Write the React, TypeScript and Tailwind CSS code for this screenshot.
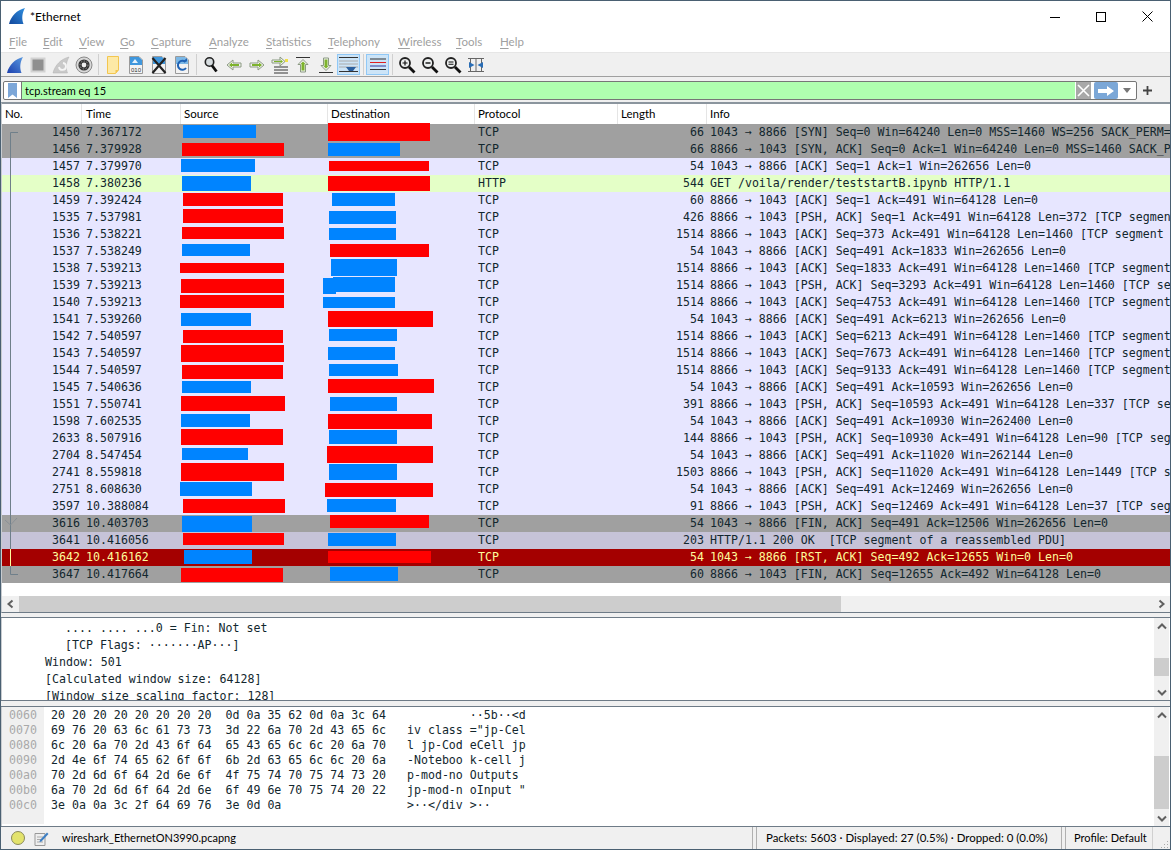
import React from "react";

const R = "#ff0000";
const B = "#0084ff";

const GRAY = "bg-[#a0a0a0]";
const LAV = "bg-[#e7e6ff]";
const GRN = "bg-[#e4ffc7]";
const DK = "text-[#12272e]";

const raw: [string, string, string, string, string, string, number[], number[]][] = [
  ["1450", "7.367172", "TCP", "66", "1043 → 8866 [SYN] Seq=0 Win=64240 Len=0 MSS=1460 WS=256 SACK_PERM=1", GRAY, [183, 256, 125, 138], [328, 430, 123, 141]],
  ["1456", "7.379928", "TCP", "66", "8866 → 1043 [SYN, ACK] Seq=0 Ack=1 Win=64240 Len=0 MSS=1460 SACK_PERM=1", GRAY, [182, 284, 143, 156], [328, 400, 143, 156]],
  ["1457", "7.379970", "TCP", "54", "1043 → 8866 [ACK] Seq=1 Ack=1 Win=262656 Len=0", LAV, [181, 255, 159, 172], [329, 429, 161, 171]],
  ["1458", "7.380236", "HTTP", "544", "GET /voila/render/teststartB.ipynb HTTP/1.1", GRN, [182, 251, 176, 191], [328, 430, 176, 191]],
  ["1459", "7.392424", "TCP", "60", "8866 → 1043 [ACK] Seq=1 Ack=491 Win=64128 Len=0", LAV, [183, 283, 193, 206], [332, 395, 193, 206]],
  ["1535", "7.537981", "TCP", "426", "8866 → 1043 [PSH, ACK] Seq=1 Ack=491 Win=64128 Len=372 [TCP segment of a reassembled PDU]", LAV, [183, 283, 209, 223], [329, 396, 211, 224]],
  ["1536", "7.538221", "TCP", "1514", "8866 → 1043 [ACK] Seq=373 Ack=491 Win=64128 Len=1460 [TCP segment of a reassembled PDU]", LAV, [182, 284, 227, 239], [329, 396, 228, 240]],
  ["1537", "7.538249", "TCP", "54", "1043 → 8866 [ACK] Seq=491 Ack=1833 Win=262656 Len=0", LAV, [182, 250, 244, 256], [330, 429, 244, 257]],
  ["1538", "7.539213", "TCP", "1514", "8866 → 1043 [ACK] Seq=1833 Ack=491 Win=64128 Len=1460 [TCP segment of a reassembled PDU]", LAV, [180, 284, 263, 273], [331, 397, 259, 276]],
  ["1539", "7.539213", "TCP", "1514", "8866 → 1043 [PSH, ACK] Seq=3293 Ack=491 Win=64128 Len=1460 [TCP segment of a reassembled PDU]", LAV, [181, 284, 279, 293], [333, 395, 277, 292]],
  ["1540", "7.539213", "TCP", "1514", "8866 → 1043 [ACK] Seq=4753 Ack=491 Win=64128 Len=1460 [TCP segment of a reassembled PDU]", LAV, [180, 284, 295, 308], [323, 395, 297, 308]],
  ["1541", "7.539260", "TCP", "54", "1043 → 8866 [ACK] Seq=491 Ack=6213 Win=262656 Len=0", LAV, [181, 251, 313, 326], [328, 433, 311, 327]],
  ["1542", "7.540597", "TCP", "1514", "8866 → 1043 [ACK] Seq=6213 Ack=491 Win=64128 Len=1460 [TCP segment of a reassembled PDU]", LAV, [183, 283, 330, 343], [329, 397, 329, 341]],
  ["1543", "7.540597", "TCP", "1514", "8866 → 1043 [ACK] Seq=7673 Ack=491 Win=64128 Len=1460 [TCP segment of a reassembled PDU]", LAV, [181, 284, 345, 362], [328, 395, 347, 360]],
  ["1544", "7.540597", "TCP", "1514", "8866 → 1043 [ACK] Seq=9133 Ack=491 Win=64128 Len=1460 [TCP segment of a reassembled PDU]", LAV, [182, 283, 365, 379], [329, 398, 364, 376]],
  ["1545", "7.540636", "TCP", "54", "1043 → 8866 [ACK] Seq=491 Ack=10593 Win=262656 Len=0", LAV, [182, 251, 381, 393], [328, 434, 379, 393]],
  ["1551", "7.550741", "TCP", "391", "8866 → 1043 [PSH, ACK] Seq=10593 Ack=491 Win=64128 Len=337 [TCP segment of a reassembled PDU]", LAV, [181, 285, 396, 411], [330, 397, 397, 411]],
  ["1598", "7.602535", "TCP", "54", "1043 → 8866 [ACK] Seq=491 Ack=10930 Win=262400 Len=0", LAV, [181, 250, 414, 427], [328, 432, 414, 429]],
  ["2633", "8.507916", "TCP", "144", "8866 → 1043 [PSH, ACK] Seq=10930 Ack=491 Win=64128 Len=90 [TCP segment of a reassembled PDU]", LAV, [181, 283, 429, 445], [329, 397, 430, 444]],
  ["2704", "8.547454", "TCP", "54", "1043 → 8866 [ACK] Seq=491 Ack=11020 Win=262144 Len=0", LAV, [182, 248, 448, 460], [327, 433, 446, 463]],
  ["2741", "8.559818", "TCP", "1503", "8866 → 1043 [PSH, ACK] Seq=11020 Ack=491 Win=64128 Len=1449 [TCP segment of a reassembled PDU]", LAV, [181, 284, 463, 481], [329, 397, 464, 480]],
  ["2751", "8.608630", "TCP", "54", "1043 → 8866 [ACK] Seq=491 Ack=12469 Win=262656 Len=0", LAV, [180, 252, 482, 496], [325, 433, 483, 497]],
  ["3597", "10.388084", "TCP", "91", "8866 → 1043 [PSH, ACK] Seq=12469 Ack=491 Win=64128 Len=37 [TCP segment of a reassembled PDU]", LAV, [183, 285, 499, 513], [327, 396, 499, 512]],
  ["3616", "10.403703", "TCP", "54", "1043 → 8866 [FIN, ACK] Seq=491 Ack=12506 Win=262656 Len=0", GRAY, [182, 252, 516, 532], [330, 429, 515, 528]],
  ["3641", "10.416056", "TCP", "203", "HTTP/1.1 200 OK  [TCP segment of a reassembled PDU]", "bg-[#c6c3d8]", [183, 284, 533, 545], [328, 396, 533, 546]],
  ["3642", "10.416162", "TCP", "54", "1043 → 8866 [RST, ACK] Seq=492 Ack=12655 Win=0 Len=0", "bg-[#a40000]", [184, 252, 550, 564], [328, 431, 551, 563]],
  ["3647", "10.417664", "TCP", "60", "8866 → 1043 [FIN, ACK] Seq=12655 Ack=492 Win=64128 Len=0", GRAY, [181, 283, 568, 582], [330, 398, 567, 581]],
];

function Redact({ b, color, top }: { b: number[]; color: string; top: number }) {
  return (
    <div
      className="absolute z-10"
      style={{ left: b[0] - 2, width: b[1] - b[0], top: b[2] - top, height: b[3] - b[2], background: color }}
    />
  );
}

const redSrc = [1, 4, 5, 6, 8, 9, 10, 12, 13, 14, 16, 18, 20, 22, 24, 26];

function PacketRow({ r, i }: { r: (typeof raw)[number]; i: number }) {
  const [no, t, p, len, info, bg, src, dst] = r;
  const top = 124 + i * 17;
  const red = redSrc.includes(i);
  return (
    <div className={`relative flex h-[17px] leading-[17px] whitespace-pre ${bg} ${i === 25 ? "text-[#fffc9c]" : DK}`}>
      <div className="w-[78px] shrink-0 text-right">{no}</div>
      <div className="w-[101px] shrink-0 pl-[6px]">{t}</div>
      <div className="w-[147px] shrink-0" />
      <div className="w-[147px] shrink-0" />
      <div className="w-[143px] shrink-0 pl-[3px]">{p}</div>
      <div className="w-[86px] shrink-0 text-right">{len}</div>
      <div className="min-w-0 flex-1 overflow-hidden pl-[6px]">{info}</div>
      <Redact b={src} color={red ? R : B} top={top} />
      <Redact b={dst} color={red ? B : R} top={top} />
      {i === 9 && <Redact b={[323, 336, 278, 294]} color={B} top={top} />}
    </div>
  );
}

function Fin({ a = "#5a9ae0", b = "#1c3fae" }: { a?: string; b?: string }) {
  return (
    <svg width="18" height="18" viewBox="0 0 18 18">
      <defs>
        <linearGradient id={`g${a.slice(1)}`} x1="1" y1="0" x2="0" y2="1">
          <stop offset="0" stopColor={a} />
          <stop offset="1" stopColor={b} />
        </linearGradient>
      </defs>
      <path d="M1 17 C3 9 9 3 17 1 C14 6 13.5 12 15.5 17 Z" fill={`url(#g${a.slice(1)})`} />
    </svg>
  );
}

function Doc({ children }: { children?: React.ReactNode }) {
  return (
    <svg width="18" height="20" viewBox="0 0 18 20">
      <path d="M2.5 1.5 H12 L15.5 5 V18.5 H2.5 Z" fill="#f3f3f3" stroke="#9a9a9a" />
      {children}
    </svg>
  );
}

function Mag({ children }: { children?: React.ReactNode }) {
  return (
    <svg width="18" height="18" viewBox="0 0 18 18">
      <circle cx="7" cy="7" r="5" fill="#eef0f0" stroke="#222" strokeWidth="1.8" />
      <path d="M11 11 L16.5 16.5" stroke="#111" strokeWidth="2.8" />
      {children}
    </svg>
  );
}

function Arrow({ d }: { d: "l" | "r" }) {
  return (
    <svg width="16" height="12" viewBox="0 0 16 12">
      <g transform={d === "r" ? "" : "translate(16 0) scale(-1 1)"}>
        <path d="M1 4 H9 V1 L15 6 L9 11 V8 H1 Z" fill="#f2f2f0" stroke="#8b9a82" />
        <path d="M3 5 H10 V3.5 L13 6 L10 8.5 V7 H3 Z" fill="#7db32c" />
      </g>
    </svg>
  );
}

const Btn = ({ on, children }: { on?: boolean; children: React.ReactNode }) => (
  <div className={`flex h-[21px] w-[23px] shrink-0 items-center justify-center ${on ? "border border-[#90c8f6] bg-[#cce4f7]" : ""}`}>
    {children}
  </div>
);
const Sep = () => (
  <div className="flex h-[21px] w-[6px] shrink-0 justify-center">
    <div className="h-full w-px bg-[#d0d0d0]" />
  </div>
);

function Toolbar() {
  return (
    <div className="flex h-[25px] shrink-0 items-center border-t border-b border-t-[#e6e6e6] border-b-[#a0a0a0] bg-[#f0f0f0] pl-[2px]">
      <Btn><Fin /></Btn>
      <Btn>
        <svg width="16" height="16" viewBox="0 0 16 16"><rect x="1.5" y="1.5" width="13" height="13" fill="#8f8f8f" stroke="#d2d2d2" strokeWidth="2" /></svg>
      </Btn>
      <Btn>
        <svg width="18" height="18" viewBox="0 0 18 18">
          <path d="M1 17 C3 9 9 3 17 1 C14 6 13.5 12 15.5 17 Z" fill="#c9c9c9" stroke="#b0b0b0" strokeWidth="0.5" />
          <path d="M11 7 A3.5 3.5 0 1 1 7 11" fill="none" stroke="#f5f5f5" strokeWidth="1.8" />
        </svg>
      </Btn>
      <Btn>
        <svg width="18" height="18" viewBox="0 0 18 18">
          <circle cx="9" cy="9" r="8" fill="#d8d8d8" stroke="#8a8a8a" />
          <circle cx="9" cy="9" r="5.6" fill="#333" />
          <circle cx="9" cy="9" r="2.4" fill="#eee" />
          <circle cx="9" cy="9" r="4" fill="none" stroke="#999" strokeDasharray="1.5 1.5" />
        </svg>
      </Btn>
      <Sep />
      <Btn>
        <svg width="14" height="18" viewBox="0 0 14 18">
          <path d="M1.5 .5 H12.5 V14 L9.5 17.5 H1.5 Z" fill="#fde9a6" stroke="#f3c64f" />
          <path d="M9.5 14 H12.5 L9.5 17.5 Z" fill="#f3c64f" />
        </svg>
      </Btn>
      <Btn>
        <Doc>
          <path d="M3 2 H12 L15 5 V10 H3 Z" fill="#3f97dd" />
          <path d="M5 8 L8 4 L11 8 Z" fill="#e6f2fb" />
          <text x="9" y="16.5" textAnchor="middle" fontSize="6" fontFamily="Liberation Sans" fill="#333">010</text>
        </Doc>
      </Btn>
      <Btn>
        <Doc>
          <path d="M3 2 H12 L15 5 V9 H3 Z" fill="#3f97dd" />
          <path d="M2.5 3 L15.5 18 M15.5 3 L2.5 18" stroke="#222" strokeWidth="2.2" />
        </Doc>
      </Btn>
      <Btn>
        <Doc>
          <path d="M3 2 H12 L15 5 V9 H3 Z" fill="#7cb8e6" />
          <path d="M12.5 7 A4.5 4.5 0 1 0 13 13" fill="none" stroke="#1f62b4" strokeWidth="2" />
          <path d="M10 6.5 H14 V3 Z" fill="#1f62b4" />
        </Doc>
      </Btn>
      <Sep />
      <Btn>
        <svg width="14" height="18" viewBox="0 0 14 18">
          <circle cx="5.5" cy="6" r="4.2" fill="#d7dde0" stroke="#222" strokeWidth="1.6" />
          <path d="M8 9.5 L12.5 15.5" stroke="#111" strokeWidth="2.8" />
        </svg>
      </Btn>
      <Btn><Arrow d="l" /></Btn>
      <Btn><Arrow d="r" /></Btn>
      <Btn>
        <svg width="18" height="18" viewBox="0 0 18 18">
          <path d="M3 11 H17 M3 14 H17 M3 17 H17" stroke="#333" strokeWidth="1" />
          <path d="M1 4 H9 V1 L14 5.5 L9 10 V7 H1 Z" fill="#f2f2f0" stroke="#8b9a82" />
          <path d="M3 5 H9.5 V3.5 L12 5.5 L9.5 7.5 V6 H3 Z" fill="#7db32c" />
          <rect x="14" y="3" width="3" height="3" fill="#f0e04a" />
        </svg>
      </Btn>
      <Btn>
        <svg width="16" height="18" viewBox="0 0 16 18">
          <path d="M1 1.5 H15" stroke="#333" />
          <path d="M8 3.5 L13 8.5 H10.5 V16 H5.5 V8.5 H3 Z" fill="#f2f2f0" stroke="#8b9a82" />
          <path d="M8 5.5 L10.5 8 H9.5 V14.5 H6.5 V8 H5.5 Z" fill="#7db32c" />
        </svg>
      </Btn>
      <Btn>
        <svg width="16" height="18" viewBox="0 0 16 18">
          <path d="M1 16.5 H15" stroke="#333" />
          <path d="M8 14.5 L13 9.5 H10.5 V2 H5.5 V9.5 H3 Z" fill="#f2f2f0" stroke="#8b9a82" />
          <path d="M8 12.5 L10.5 10 H9.5 V3.5 H6.5 V10 H5.5 Z" fill="#7db32c" />
        </svg>
      </Btn>
      <Btn on>
        <svg width="19" height="17" viewBox="0 0 19 17">
          <path d="M0 1.5 H19 M0 15.5 H19" stroke="#333" />
          <path d="M0 5 H19 M0 8 H19 M0 11 H19" stroke="#aaa" />
          <path d="M7 11 H17 L14 15 H10 Z" fill="#2a5f9e" />
        </svg>
      </Btn>
      <Sep />
      <Btn on>
        <svg width="16" height="13" viewBox="0 0 16 13">
          <path d="M0 1 H16" stroke="#333" />
          <path d="M0 4.5 H16" stroke="#e02020" />
          <path d="M0 8 H16" stroke="#303a9c" />
          <path d="M0 11.5 H16" stroke="#333" />
        </svg>
      </Btn>
      <Sep />
      <Btn><Mag><path d="M4.5 7 H9.5 M7 4.5 V9.5" stroke="#111" strokeWidth="1.2" /></Mag></Btn>
      <Btn><Mag><path d="M4.5 7 H9.5" stroke="#111" strokeWidth="1.4" /></Mag></Btn>
      <Btn><Mag><path d="M4.5 6 H9.5 M4.5 8.2 H9.5" stroke="#111" strokeWidth="1.1" /></Mag></Btn>
      <Btn>
        <svg width="16" height="16" viewBox="0 0 16 16">
          <path d="M0 1.5 H16 M0 14.5 H16 M2.5 1 V15 M13.5 1 V15 M8 1 V15" stroke="#666" />
          <path d="M1 5 L6.5 8 L1 11 Z M15 5 L9.5 8 L15 11 Z" fill="#2a6db5" />
        </svg>
      </Btn>
    </div>
  );
}

const menus: [string, string, string][] = [
  ["F", "ile", "w-[34px]"],
  ["E", "dit", "w-[36px]"],
  ["V", "iew", "w-[41px]"],
  ["G", "o", "w-[31px]"],
  ["C", "apture", "w-[58px]"],
  ["A", "nalyze", "w-[57px]"],
  ["S", "tatistics", "w-[62px]"],
  ["T", "elephony", "w-[70px]"],
  ["W", "ireless", "w-[58px]"],
  ["T", "ools", "w-[44px]"],
  ["H", "elp", "w-[40px]"],
];

function Chev({ dir }: { dir: "l" | "r" | "u" | "d" }) {
  const p = { l: "M6.5 1.5 L2.5 5 L6.5 8.5", r: "M2.5 1.5 L6.5 5 L2.5 8.5", u: "M1 6.5 L5 2.5 L9 6.5", d: "M1 3.5 L5 7.5 L9 3.5" }[dir];
  return (
    <svg width="10" height="10" viewBox="0 0 10 10">
      <path d={p} fill="none" stroke="#606060" strokeWidth="2" />
    </svg>
  );
}

function VScroll({ before, thumb }: { before: string; thumb: string }) {
  return (
    <div className="mr-[1px] flex w-[15px] shrink-0 flex-col bg-[#f0f0f0]">
      <div className="flex h-[17px] shrink-0 items-center justify-center"><Chev dir="u" /></div>
      <div className="min-h-0 flex-1">
        <div className={before} />
        <div className={`${thumb} bg-[#cdcdcd]`} />
      </div>
      <div className="flex h-[17px] shrink-0 items-center justify-center"><Chev dir="d" /></div>
    </div>
  );
}

const hex: [string, string, string][] = [
  ["0060", "20 20 20 20 20 20 20 20  0d 0a 35 62 0d 0a 3c 64", "         ··5b··<d"],
  ["0070", "69 76 20 63 6c 61 73 73  3d 22 6a 70 2d 43 65 6c", 'iv class ="jp-Cel'],
  ["0080", "6c 20 6a 70 2d 43 6f 64  65 43 65 6c 6c 20 6a 70", "l jp-Cod eCell jp"],
  ["0090", "2d 4e 6f 74 65 62 6f 6f  6b 2d 63 65 6c 6c 20 6a", "-Noteboo k-cell j"],
  ["00a0", "70 2d 6d 6f 64 2d 6e 6f  4f 75 74 70 75 74 73 20", "p-mod-no Outputs "],
  ["00b0", "6a 70 2d 6d 6f 64 2d 6e  6f 49 6e 70 75 74 20 22", 'jp-mod-n oInput "'],
  ["00c0", "3e 0a 0a 3c 2f 64 69 76  3e 0d 0a               ", ">··</div >··"],
];

const UI = "font-['Lato','Liberation_Sans',sans-serif]";
const MONO = "font-['DejaVu_Sans_Mono',monospace] text-[11.6px]";

const headers: [string, string][] = [
  ["No.", "w-[80px] pl-[3px]"],
  ["Time", "w-[99px] pl-[4px]"],
  ["Source", "w-[147px] pl-[3px]"],
  ["Destination", "w-[147px] pl-[3px]"],
  ["Protocol", "w-[143px] pl-[3px]"],
  ["Length", "w-[89px] pl-[3px]"],
];

export default function App() {
  return (
    <div className={`flex h-[850px] w-[1171px] flex-col overflow-hidden border border-[#4a6072] bg-white ${UI} text-[11.5px] text-black`}>
      {/* title bar */}
      <div className="flex h-[31px] shrink-0 items-center bg-white">
        <div className="mt-[-1px] mr-[4px] ml-[7px]"><Fin a="#2f8fe0" b="#12479b" /></div>
        <div className="text-[12px]">*Ethernet</div>
        <div className="ml-auto flex items-center">
          <div className="flex h-[31px] w-[46px] items-center justify-center">
            <svg width="10" height="10" viewBox="0 0 10 10"><path d="M0 5.5 H10" stroke="#000" /></svg>
          </div>
          <div className="flex h-[31px] w-[46px] items-center justify-center">
            <svg width="10" height="10" viewBox="0 0 10 10"><rect x=".5" y=".5" width="9" height="9" fill="none" stroke="#000" /></svg>
          </div>
          <div className="flex h-[31px] w-[46px] items-center justify-center">
            <svg width="11" height="11" viewBox="0 0 11 11"><path d="M.5 .5 L10.5 10.5 M10.5 .5 L.5 10.5" stroke="#000" /></svg>
          </div>
        </div>
      </div>
      {/* menu */}
      <div className="flex h-[20px] shrink-0 items-center bg-white pl-[8px] text-[#a0a0a0]">
        {menus.map(([a, b, w], i) => (
          <div key={i} className={w}>
            <span className="underline underline-offset-2">{a}</span>
            {b}
          </div>
        ))}
      </div>
      <Toolbar />
      {/* filter */}
      <div className="flex h-[25px] shrink-0 items-start bg-[#f0f0f0] pt-[4px] pl-[2px]">
        <div className="flex h-[19px] w-[1134px] items-stretch overflow-hidden rounded-[2px] border border-[#767676] bg-white">
          <div className="flex w-[18px] shrink-0 items-center justify-center border-r border-[#767676]">
            <svg width="9" height="15" viewBox="0 0 9 15"><path d="M0 0 H9 V15 L4.5 11.5 L0 15 Z" fill="#7da7d8" /></svg>
          </div>
          <div className="flex-1 bg-[#afffaf] pl-[3px] text-[11px] leading-[17px]">tcp.stream eq 15</div>
          <div className="ml-px flex w-[15px] shrink-0 items-center justify-center bg-[#a8a8a8]">
            <svg width="13" height="13" viewBox="0 0 13 13"><path d="M1 1 L12 12 M12 1 L1 12" stroke="#fff" strokeWidth="1.6" /></svg>
          </div>
          <div className="ml-[3px] flex w-[24px] shrink-0 items-center justify-center rounded-[2px] bg-[#7ba7d7]">
            <svg width="18" height="12" viewBox="0 0 18 12"><path d="M1 4 H10 V1 L17 6 L10 11 V8 H1 Z" fill="#fff" /></svg>
          </div>
          <div className="flex w-[18px] shrink-0 items-center justify-center">
            <svg width="8" height="5" viewBox="0 0 8 5"><path d="M0 0 H8 L4 5 Z" fill="#777" /></svg>
          </div>
        </div>
        <div className="flex h-[19px] w-[19px] items-center justify-center pl-[1px]">
          <svg width="9" height="9" viewBox="0 0 9 9"><path d="M4.5 0 V9 M0 4.5 H9" stroke="#444" strokeWidth="1.8" /></svg>
        </div>
      </div>
      {/* packet list */}
      <div className="flex h-[511px] shrink-0 flex-col border-t-2 border-b border-l border-t-[#8b959e] border-b-[#6e7b87] border-l-[#c8ccd0] bg-white">
        <div className="flex h-[20px] shrink-0 items-center bg-white">
          {headers.map(([h, w]) => (
            <div key={h} className={`flex h-full shrink-0 items-center border-r border-[#e5e5e5] ${w}`}>{h}</div>
          ))}
          <div className="pl-[3px]">Info</div>
        </div>
        <div className={`relative ${MONO}`}>
          {raw.map((r, i) => (
            <PacketRow key={r[0]} r={r} i={i} />
          ))}
          <svg className="absolute top-0 left-0" width="20" height="459" viewBox="0 0 20 459">
            <path d="M16 8.5 H8.5 V425" fill="none" stroke="#6f7f8a" />
            <path d="M8.5 442 V450.5 H16" fill="none" stroke="#6f7f8a" />
            <path d="M8.5 425 V442" stroke="#fffc9c" />
            <path d="M3 396 L8.5 401 L15 394" fill="none" stroke="#8a9096" />
          </svg>
        </div>
        <div className="h-[13px] shrink-0" />
        <div className="flex h-[16px] shrink-0 items-center bg-[#f0f0f0]">
          <div className="flex h-full w-[17px] shrink-0 items-center justify-center"><Chev dir="l" /></div>
          <div className="h-full w-[822px] bg-[#cdcdcd]" />
          <div className="ml-auto flex h-full w-[17px] items-center justify-center"><Chev dir="r" /></div>
        </div>
      </div>
      {/* splitter */}
      <div className="h-[5px] shrink-0 border-b border-[#6e7b87] bg-[#f0f0f0]" />
      {/* details */}
      <div className="flex h-[82px] shrink-0 overflow-hidden border-l border-[#c8ccd0] bg-white">
        <div className={`min-w-0 flex-1 overflow-hidden pt-[2px] leading-[17px] whitespace-pre text-[#12272e] ${MONO}`}>
          <div className="pl-[63px]">.... .... ...0 = Fin: Not set</div>
          <div className="pl-[63px]">[TCP Flags: ·······AP···]</div>
          <div className="pl-[43px]">Window: 501</div>
          <div className="pl-[43px]">[Calculated window size: 64128]</div>
          <div className="pl-[43px]">[Window size scaling factor: 128]</div>
        </div>
        <VScroll before="h-[23px]" thumb="h-[18px]" />
      </div>
      {/* splitter */}
      <div className="h-[7px] shrink-0 border-y border-[#6e7b87] bg-[#f0f0f0]" />
      {/* hex */}
      <div className="flex h-[119px] shrink-0 overflow-hidden bg-white">
        <div className={`flex min-w-0 flex-1 overflow-hidden border-l border-[#c8ccd0] pb-[2px] leading-[15px] whitespace-pre ${MONO}`}>
          <div className="w-[42px] shrink-0 bg-[#f0f0f0] pl-[7px] text-[#a9a9a9]">
            <div className="h-[1px]" />
            {hex.map((h) => <div key={h[0]}>{h[0]}</div>)}
          </div>
          <div className="pl-[7px] text-[#12272e]">
            <div className="h-[1px]" />
            {hex.map((h) => (
              <div key={h[0]}>{h[1] + "   " + h[2]}</div>
            ))}
          </div>
        </div>
        <VScroll before="h-[32px]" thumb="h-[53px]" />
      </div>
      {/* status */}
      <div className="flex h-[23px] shrink-0 items-center border-t border-[#6e7b87] bg-[#f0f0f0] pl-[10px] text-[11px] whitespace-nowrap">
        <div className="h-[14px] w-[14px] shrink-0 rounded-full border border-[#8a8a5a] bg-[#e3e36c]" />
        <div className="ml-[9px] w-[19px] shrink-0">
          <svg width="15" height="15" viewBox="0 0 15 15">
            <path d="M1 2.5 H11 V14.5 H1 Z" fill="#eee" stroke="#999" />
            <path d="M3 6 H9 M3 8.5 H9 M3 11 H9" stroke="#aaa" />
            <path d="M6 9 L13 1.5 L14.5 3 L7.5 10.5 L5.5 11 Z" fill="#3d7fc4" />
          </svg>
        </div>
        <div className="w-[699px] shrink-0 pl-[9px]">wireshark_EthernetON3990.pcapng</div>
        <div className="h-full w-[5px] shrink-0 border-x border-[#b0b0b0]" />
        <div className="w-[304px] shrink-0 pl-[9px] text-[11.45px]">Packets: 5603 · Displayed: 27 (0.5%) · Dropped: 0 (0.0%)</div>
        <div className="h-full w-[5px] shrink-0 border-x border-[#b0b0b0]" />
        <div className="w-[86px] shrink-0 pl-[8px]">Profile: Default</div>
        <div className="h-full w-px shrink-0 bg-[#d0d0d0]" />
        <svg className="ml-[7px] self-end" width="9" height="9" viewBox="0 0 9 9">
          <path d="M7 1 h1 v1 h-1z M4 4 h1 v1 h-1z M7 4 h1 v1 h-1z M1 7 h1 v1 h-1z M4 7 h1 v1 h-1z M7 7 h1 v1 h-1z" fill="#aaa" />
        </svg>
      </div>
    </div>
  );
}
